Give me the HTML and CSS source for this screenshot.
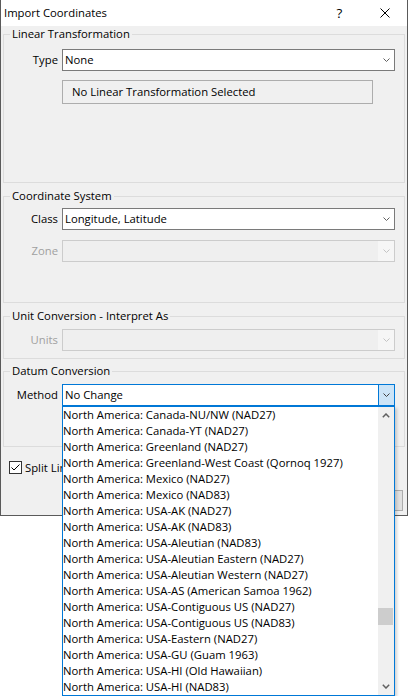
FILE: index.html
```html
<!DOCTYPE html>
<html lang="en">
<head>
<meta charset="utf-8">
<title>Import Coordinates</title>
<link rel="stylesheet" href="styles.css">
</head>
<body>
<div class="window">
  <div class="titlebar">
    <span class="title">Import Coordinates</span>
    <span class="tbtn help">?</span>
    <span class="tbtn close"><svg width="10" height="10" viewBox="0 0 10 10"><path d="M0.5 0.5 L9.5 9.5 M9.5 0.5 L0.5 9.5" stroke="#000" stroke-width="1" fill="none"/></svg></span>
  </div>
  <div class="client">
    <div class="group g1">
      <div class="legend">Linear Transformation</div>
      <div class="row first-g1">
        <span class="lbl">Type</span>
        <div class="combo"><span class="val">None</span><span class="btn"><svg width="7" height="4" viewBox="0 0 7 4"><polyline points="0.5,0.5 3.5,3.5 6.5,0.5" fill="none" stroke="#606060"/></svg></span></div>
      </div>
      <div class="static">No Linear Transformation Selected</div>
    </div>

    <div class="group g2">
      <div class="legend">Coordinate System</div>
      <div class="row first-g2">
        <span class="lbl">Class</span>
        <div class="combo"><span class="val">Longitude, Latitude</span><span class="btn"><svg width="7" height="4" viewBox="0 0 7 4"><polyline points="0.5,0.5 3.5,3.5 6.5,0.5" fill="none" stroke="#606060"/></svg></span></div>
      </div>
      <div class="row second">
        <span class="lbl disabled">Zone</span>
        <div class="combo off"><span class="val"></span><span class="btn"><svg width="7" height="4" viewBox="0 0 7 4"><polyline points="0.5,0.5 3.5,3.5 6.5,0.5" fill="none" stroke="#c4c4c4"/></svg></span></div>
      </div>
    </div>

    <div class="group g3">
      <div class="legend">Unit Conversion - Interpret As</div>
      <div class="row first-g3">
        <span class="lbl disabled">Units</span>
        <div class="combo off"><span class="val"></span><span class="btn"><svg width="7" height="4" viewBox="0 0 7 4"><polyline points="0.5,0.5 3.5,3.5 6.5,0.5" fill="none" stroke="#c4c4c4"/></svg></span></div>
      </div>
    </div>

    <div class="group g4">
      <div class="legend">Datum Conversion</div>
      <div class="row first-g4">
        <span class="lbl">Method</span>
        <div class="combo focus">
          <span class="val">No Change</span>
          <span class="btn"><svg width="7" height="4" viewBox="0 0 7 4"><polyline points="0.5,0.5 3.5,3.5 6.5,0.5" fill="none" stroke="#404040"/></svg></span>
          <div class="dropdown">
            <ul class="items">
              <li>North America: Canada-NU/NW (NAD27)</li>
              <li>North America: Canada-YT (NAD27)</li>
              <li>North America: Greenland (NAD27)</li>
              <li>North America: Greenland-West Coast (Qornoq 1927)</li>
              <li>North America: Mexico (NAD27)</li>
              <li>North America: Mexico (NAD83)</li>
              <li>North America: USA-AK (NAD27)</li>
              <li>North America: USA-AK (NAD83)</li>
              <li>North America: USA-Aleutian (NAD83)</li>
              <li>North America: USA-Aleutian Eastern (NAD27)</li>
              <li>North America: USA-Aleutian Western (NAD27)</li>
              <li>North America: USA-AS (American Samoa 1962)</li>
              <li>North America: USA-Contiguous US (NAD27)</li>
              <li>North America: USA-Contiguous US (NAD83)</li>
              <li>North America: USA-Eastern (NAD27)</li>
              <li>North America: USA-GU (Guam 1963)</li>
              <li>North America: USA-HI (Old Hawaiian)</li>
              <li>North America: USA-HI (NAD83)</li>
            </ul>
            <div class="scrollbar">
              <div class="sbtn"><svg width="8" height="5" viewBox="0 0 8 5"><polyline points="0.8,4.2 4,1 7.2,4.2" fill="none" stroke="#606060" stroke-width="1.5"/></svg></div>
              <div class="track"><div class="thumb"></div></div>
              <div class="sbtn"><svg width="8" height="5" viewBox="0 0 8 5"><polyline points="0.8,0.8 4,4 7.2,0.8" fill="none" stroke="#606060" stroke-width="1.5"/></svg></div>
            </div>
          </div>
        </div>
      </div>
    </div>

    <div class="check-row">
      <span class="checkbox"><svg width="13" height="13" viewBox="0 0 13 13"><rect x="0.5" y="0.5" width="12" height="12" fill="#fff" stroke="#333"/><polyline points="2.5,6.5 5,9 10.5,3.5" fill="none" stroke="#000" stroke-width="1"/></svg></span>
      <span class="check-label">Split Lines</span>
    </div>

    <div class="buttons">
      <button class="pbtn">OK</button>
      <button class="pbtn">Cancel</button>
    </div>
  </div>
</div>
</body>
</html>
```

FILE: styles.css
```css
* { box-sizing: border-box; }
html, body { margin: 0; padding: 0; }
body {
  background: #fff;
  width: 408px;
  height: 696px;
  overflow: hidden;
  font-family: "Open Sans", "Noto Sans", sans-serif;
  font-size: 11.3px;
  color: #000;
}
.window {
  width: 408px;
  height: 516px;
  border: 1px solid #5a5a5a;
  border-top: none;
  background: #f0f0f0;
  display: flex;
  flex-direction: column;
}
.titlebar {
  height: 26px;
  flex: none;
  background: #fff;
  display: flex;
  align-items: center;
  padding-left: 3px;
}
.title { flex: 1; line-height: 16px; }
.tbtn {
  width: 45px;
  height: 26px;
  display: flex;
  align-items: center;
  justify-content: center;
}
.help { font-size: 13.5px; line-height: 16px; }
.client {
  flex: 1;
  padding: 0 2px;
  display: flex;
  flex-direction: column;
}
.group {
  border: 1px solid #dcdcdc;
  flex: none;
}
.g1 { margin-top: 8px; height: 149px; }
.g2 { margin-top: 13px; height: 107px; }
.g3 { margin-top: 13px; height: 43px; }
.g4 { margin-top: 12px; height: 76px; }
.legend {
  width: max-content;
  height: 16px;
  line-height: 16px;
  margin: -9px 0 0 6px;
  padding: 0 2px;
  background: #f0f0f0;
}
.row {
  display: flex;
  align-items: center;
  height: 22px;
}
.first-g1 { margin-top: 7px; }
.first-g2 { margin-top: 4px; }
.first-g3 { margin-top: 5px; }
.first-g4 { margin-top: 5px; }
.second { margin-top: 10px; }
.lbl {
  width: 54px;
  margin-right: 4px;
  text-align: right;
  line-height: 16px;
}
.lbl.disabled { color: #a0a0a0; }
.combo {
  position: relative;
  width: 333px;
  height: 22px;
  border: 1px solid #7a7a7a;
  background: #fff;
  display: flex;
  align-items: stretch;
}
.combo .val {
  flex: 1;
  padding-left: 2px;
  line-height: 20px;
}
.combo .btn {
  width: 16px;
  display: flex;
  align-items: center;
  justify-content: center;
}
.combo.off { border-color: #cccccc; background: #efefef; }
.combo.off .btn { background: #f6f6f6; }
.combo.focus { border-color: #0078d7; }
.combo.focus .btn {
  background: #cce4f7;
  border-left: 1px solid #0078d7;
  width: 16px;
}
.static {
  margin: 9px 0 0 58px;
  width: 311px;
  height: 24px;
  border: 1px solid #adadad;
  padding-left: 9px;
  line-height: 22px;
}
.dropdown {
  position: absolute;
  left: -1px;
  top: calc(100% + 1px);
  width: 333px;
  height: 290px;
  border: 1px solid #0078d7;
  background: #fff;
  display: flex;
  box-shadow: 2px 2px 3px rgba(0, 0, 0, 0.18);
  z-index: 5;
}
.items {
  list-style: none;
  margin: 0;
  padding: 0;
  flex: 1;
  overflow: hidden;
}
.items li {
  height: 16px;
  line-height: 16px;
  white-space: nowrap;
}
.scrollbar {
  width: 16px;
  background: #f0f0f0;
  display: flex;
  flex-direction: column;
}
.sbtn {
  height: 17px;
  display: flex;
  align-items: center;
  justify-content: center;
}
.track { flex: 1; }
.thumb {
  margin: 184px 1px 0 0;
  height: 17px;
  background: #cdcdcd;
}
.check-row {
  margin-top: 14px;
  height: 13px;
  display: flex;
  align-items: center;
  padding-left: 6px;
}
.checkbox { width: 13px; height: 13px; display: block; line-height: 0; }
.check-label {
  margin-left: 3px;
  line-height: 16px;
  white-space: nowrap;
  width: 37px;
  overflow: hidden;
}
.buttons {
  margin-top: 16px;
  display: flex;
  justify-content: flex-end;
  gap: 6px;
  padding-right: 2px;
}
.pbtn {
  width: 75px;
  height: 21px;
  font: inherit;
  background: #e1e1e1;
  border: 1px solid #adadad;
  padding: 0;
}
```
